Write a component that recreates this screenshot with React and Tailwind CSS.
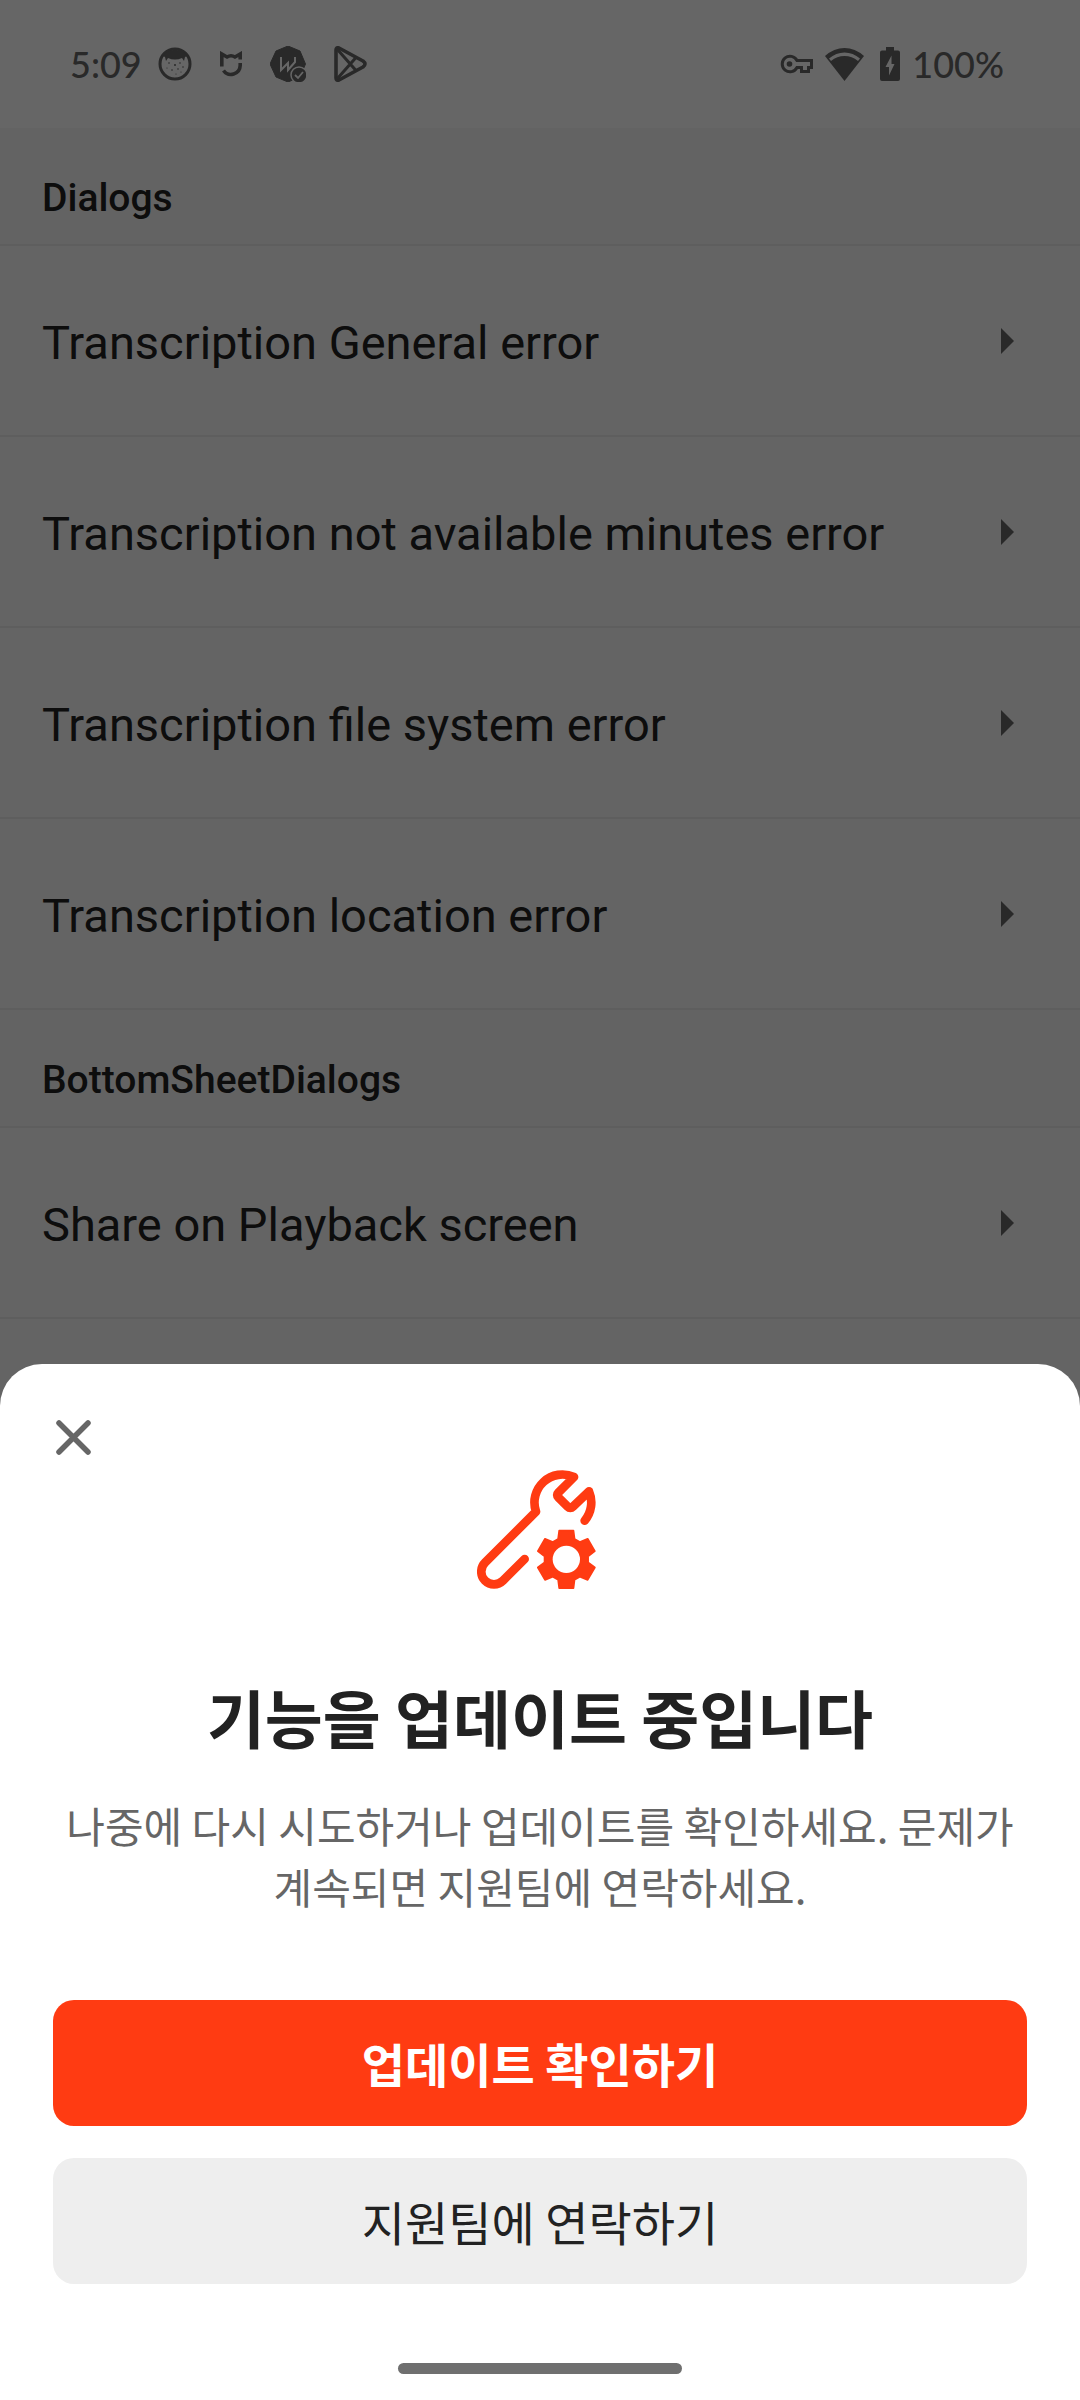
const gearPoints = Array.from({ length: 6 }, (_, i) => {
  const at = (radius, degrees) => {
    const a = ((degrees + i * 60) * Math.PI) / 180;
    return `${(382 + radius * Math.sin(a)).toFixed(1)},${(358 - radius * Math.cos(a)).toFixed(1)}`;
  };
  return [at(66, -22), at(89, -14), at(89, 14), at(66, 22)].join(" ");
}).join(" ");

function WrenchGearIcon() {
  return (
    <svg aria-hidden="true" viewBox="114 90 378 378" className="size-[126px] text-[#ff3b12]">
      <path
        d="M257 357 L192 422 A38 38 0 0 1 138 368 L291 215 A84 84 0 0 1 405 111 L358 158 Q351 165 358 172 L386 200 Q394 208 402 200 L450 154 A85 85 0 0 1 437 242"
        fill="none"
        stroke="currentColor"
        strokeWidth="26"
        strokeLinecap="round"
        strokeLinejoin="round"
      />
      <polygon points={gearPoints} fill="currentColor" stroke="currentColor" strokeWidth="5" strokeLinejoin="round" />
      <circle cx="382" cy="358" r="41" fill="#fff" />
    </svg>
  );
}

function AvatarIcon() {
  return (
    <svg aria-hidden="true" viewBox="0 0 34 34" className="size-[34px]">
      <circle cx="17" cy="17" r="15" fill="none" stroke="currentColor" strokeWidth="3" />
      <path d="M5 9C10 1 24 1 29 9L27 10L26 14L24 11Q17 14 10 11L8 14L7 10Z" fill="currentColor" />
      <g fill="currentColor">
        <circle cx="11" cy="16" r="0.800" />
        <circle cx="17" cy="18" r="1" />
        <circle cx="22" cy="16" r="0.800" />
        <circle cx="25" cy="20" r="0.800" />
        <circle cx="9" cy="21" r="0.600" />
        <circle cx="14" cy="23" r="0.800" />
        <circle cx="20" cy="22" r="0.800" />
        <circle cx="18" cy="27" r="0.600" />
        <circle cx="23" cy="25" r="0.600" />
      </g>
    </svg>
  );
}

function CrownShieldIcon() {
  return (
    <svg aria-hidden="true" viewBox="0 0 22 26" className="h-[26px] w-[22px]">
      <path
        d="M1.800 15.500V3L7 6Q11 3.500 15 6L20.200 3V8.500M20.200 12V14.500A9.200 9.200 0 0 1 3.500 19.500"
        fill="none"
        stroke="currentColor"
        strokeWidth="3.600"
      />
    </svg>
  );
}

function BadgeIcon() {
  return (
    <svg aria-hidden="true" viewBox="0 0 36 36" className="size-9">
      <path d="M18 0L30 5L35.500 18L30 31L18 36L6 31L0 18L6 5Z" fill="currentColor" stroke="currentColor" strokeLinejoin="round" />
      <path d="M11 11V24L18 17V24L25 16V11" fill="none" stroke="#fff" strokeWidth="2" />
      <circle cx="29" cy="29" r="8" fill="currentColor" stroke="#fff" strokeWidth="1.500" />
      <path d="M25 29L28 32L33 26" fill="none" stroke="#fff" strokeWidth="1.800" />
    </svg>
  );
}

function PlayStoreIcon() {
  return (
    <svg aria-hidden="true" viewBox="0 0 33 36" className="h-9 w-[33px]" fill="none" stroke="currentColor" strokeLinejoin="round">
      <path d="M2 4Q2 1 5 2L29 15Q33 18 29 21L5 34Q2 35 2 32Z" strokeWidth="3.600" />
      <path d="M3 3L22 24.500M3 33L22 11.500" strokeWidth="3" />
    </svg>
  );
}

function KeyIcon() {
  return (
    <svg aria-hidden="true" viewBox="0 0 33 20" className="h-5 w-[33px]">
      <path
        d="M17 6.500H31.500V13.500H28.500V17.500H21.500V13.500H17A7.800 7.800 0 1 1 17 6.500Z"
        fill="none"
        stroke="currentColor"
        strokeWidth="3"
      />
      <circle cx="9.500" cy="10" r="2.800" fill="currentColor" />
    </svg>
  );
}

function WifiIcon() {
  return (
    <svg aria-hidden="true" viewBox="0 0 39 33" className="h-[33px] w-[39px]">
      <path d="M19.500 0Q9 0 0 8L19.500 33L39 8Q30 0 19.500 0Z" fill="currentColor" />
      <path d="M4 10.500Q11 4.500 19.500 4.500Q28 4.500 35 10.500L33 13Q27 8 19.500 8Q12 8 6 13Z" fill="#fff" />
    </svg>
  );
}

function BatteryIcon() {
  return (
    <svg aria-hidden="true" viewBox="0 0 20 34" className="h-[34px] w-5">
      <path d="M6 0H14V3.500H18Q20 3.500 20 5.500V32Q20 34 18 34H2Q0 34 0 32V5.500Q0 3.500 2 3.500H6Z" fill="currentColor" />
      <path d="M11.500 8.500L5.500 20H9V28.500L14.500 17H11.500Z" fill="#fff" />
    </svg>
  );
}

function SectionHeader({ children }) {
  return (
    <h2 className="border-b-2 border-[#ebebeb] bg-[#f8f8f8] px-[42px] pt-[46px] pb-[22px] text-[39px] leading-12 font-medium">
      {children}
    </h2>
  );
}

function Row({ children }) {
  return (
    <button
      type="button"
      className="flex w-full items-center justify-between border-b-2 border-[#ebebeb] px-[42px] py-16 text-left text-[47px] leading-14"
    >
      <span className="pt-[5px]">{children}</span>
      <svg aria-hidden="true" viewBox="0 0 14 26" className="mr-[23px] h-[26px] w-[14px] text-[#666]">
        <path d="M0 0L13 13L0 26Z" fill="currentColor" />
      </svg>
    </button>
  );
}

const dialogRows = [
  "Transcription General error",
  "Transcription not available minutes error",
  "Transcription file system error",
  "Transcription location error",
];

export default function App() {
  return (
    <div className="relative flex min-h-screen flex-col bg-[#fafafa] font-['Roboto',sans-serif] text-[#222]">
      <header className="flex h-32 items-center justify-between bg-white pr-[76px] pl-[70px] font-['Lato',sans-serif] text-[36px] leading-none font-medium text-[#666]">
        <div className="flex items-center">
          <span className="mr-4">5:09</span>
          <AvatarIcon />
          <div className="ml-7 flex items-center gap-7">
            <CrownShieldIcon />
            <BadgeIcon />
            <PlayStoreIcon />
          </div>
        </div>
        <div className="flex items-center">
          <KeyIcon />
          <div className="mr-3 ml-3 flex items-center gap-4">
            <WifiIcon />
            <BatteryIcon />
          </div>
          <span>100%</span>
        </div>
      </header>

      <main>
        <SectionHeader>Dialogs</SectionHeader>
        {dialogRows.map((label) => (
          <Row key={label}>{label}</Row>
        ))}
        <SectionHeader>BottomSheetDialogs</SectionHeader>
        <Row>Share on Playback screen</Row>
      </main>

      <div className="fixed inset-0 bg-black/60" />

      <section
        role="dialog"
        aria-modal="true"
        aria-labelledby="sheet-title"
        className="fixed inset-x-0 bottom-0 flex flex-col rounded-t-[42px] bg-white px-[53px] pt-[53px] pb-[26px] font-['Noto_Sans_CJK_KR',sans-serif]"
      >
        <button type="button" aria-label="닫기" className="size-[42px] text-[#666]">
          <svg aria-hidden="true" viewBox="0 0 42 42" className="size-[42px]">
            <path d="M6 6L35 35M35 6L6 35" stroke="currentColor" strokeWidth="5.500" strokeLinecap="round" />
          </svg>
        </button>
        <div className="mt-[11px] flex flex-col items-center text-center">
          <WrenchGearIcon />
          <h1 id="sheet-title" className="mt-[74px] text-[63px] leading-[92px] font-bold">
            기능을 업데이트 중입니다
          </h1>
          <p className="mt-8 text-[42px] leading-[61px] break-keep text-[#666]">
            나중에 다시 시도하거나 업데이트를 확인하세요. 문제가 계속되면 지원팀에 연락하세요.
          </p>
        </div>
        <div className="mt-[84px] flex flex-col gap-8 text-[47px] leading-[70px]">
          <button type="button" className="rounded-[21px] bg-[#ff3b12] py-7 font-bold text-white">
            업데이트 확인하기
          </button>
          <button type="button" className="rounded-[21px] bg-[#eee] py-7">
            지원팀에 연락하기
          </button>
        </div>
        <div className="mt-[79px] h-[11px] w-[284px] self-center rounded-full bg-[#6f6f6f]" />
      </section>
    </div>
  );
}
